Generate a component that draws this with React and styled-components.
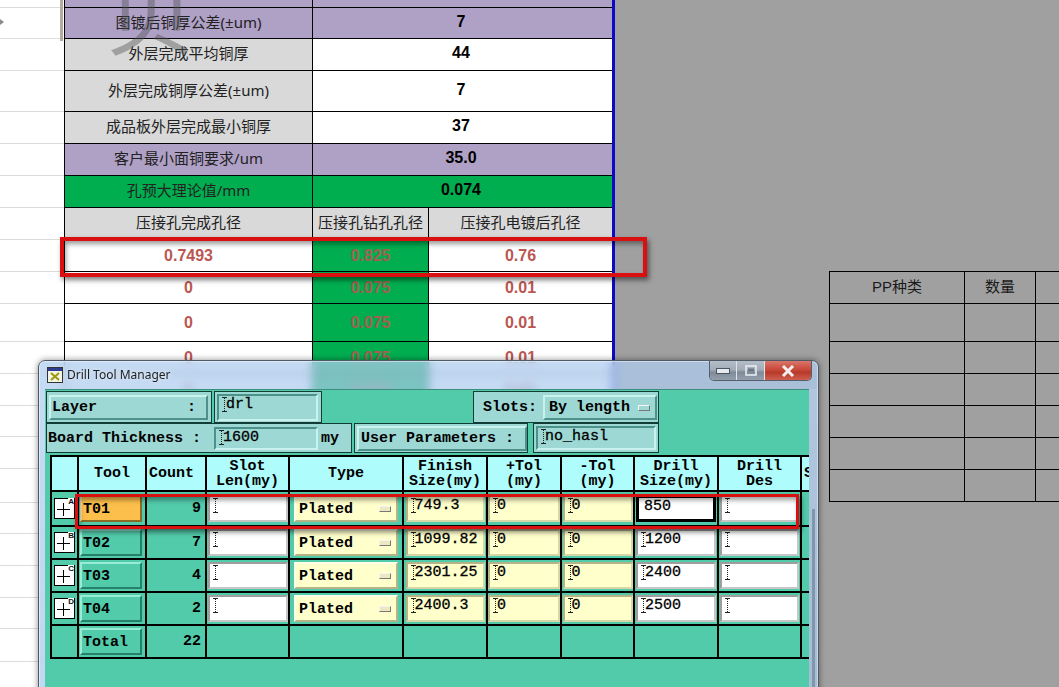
import React from 'react';
import styled, {createGlobalStyle} from 'styled-components';

const GlobalStyle = createGlobalStyle`
  html, body { margin: 0; padding: 0; overflow: hidden; background: #a0a0a0; }
  * { box-sizing: border-box; }
`;

const sheetFont = `"Liberation Sans", "Noto Sans CJK SC", sans-serif`;
const labelFont = `"Noto Sans", "Noto Sans CJK SC", sans-serif`;
const cjkFont = `"Noto Sans CJK SC", "Liberation Sans", sans-serif`;
const monoFont = `"Liberation Mono", "DejaVu Sans Mono", monospace`;

const sheetRows = [
  {h: 8, cells: ['', ''], bg: '#afa0c6'},
  {h: 31, cells: ['图镀后铜厚公差(±um)', '7'], bg: '#afa0c6'},
  {h: 32, cells: ['外层完成平均铜厚', '44'], bg: '#d9d9d9', value: '#fff'},
  {h: 41, cells: ['外层完成铜厚公差(±um)', '7'], bg: '#d9d9d9', value: '#fff'},
  {h: 32, cells: ['成品板外层完成最小铜厚', '37'], bg: '#d9d9d9', value: '#fff'},
  {h: 32, cells: ['客户最小面铜要求/um', '35.0'], bg: '#afa0c6'},
  {h: 32, cells: ['孔预大理论值/mm', '0.074'], bg: '#00ae50'},
];

const holeRows = [
  {h: 32, vals: ['0.7493', '0.825', '0.76']},
  {h: 32, vals: ['0', '0.075', '0.01']},
  {h: 38, vals: ['0', '0.075', '0.01']},
  {h: 32, vals: ['0', '0.075', '0.01']},
  {h: 32, vals: ['0', '0.075', '0.01']},
];

const gutterRows = [8, 31, 32, 41, 32, 32, 32, 32, 32, 32, 38, 32, 32, 31, 32, 34, 31, 32, 32, 31, 33];
const ppRows = [38, 32, 32, 32, 32, 32];

const tools = [
  {id: 'T01', mark: 'A', count: 9, finish: '749.3', drill: '850', hot: true},
  {id: 'T02', mark: 'B', count: 7, finish: '1099.82', drill: '1200'},
  {id: 'T03', mark: 'C', count: 4, finish: '2301.25', drill: '2400'},
  {id: 'T04', mark: 'D', count: 2, finish: '2400.3', drill: '2500'},
];

function Caret() {
  return (
    <CaretSvg width="5" height="15" viewBox="0 0 5 15">
      <path d="M0 .5h5M0 14.5h5" stroke="#222" strokeWidth="1" />
      <path d="M2.5 1v13" stroke="#222" strokeWidth="1" strokeDasharray="1 1" />
    </CaretSvg>
  );
}

function PlusBox({mark}) {
  return (
    <Expand>
      <svg width="19" height="19" viewBox="0 0 19 19">
        <path d="M2 10.5h13M8.5 4v13" stroke="#000" strokeWidth="1" />
      </svg>
      <Mark>{mark}</Mark>
    </Expand>
  );
}

export default function App() {
  return (
    <Page>
      <GlobalStyle />
      <Gutter>
        {gutterRows.map((h, i) => <GutterRow key={i} $h={h} />)}
        <GutterArrow />
      </Gutter>

      <Sheet>
        {sheetRows.map(({h, cells, bg, value}, i) => (
          <SheetRow key={i} $h={h} $cols="248px 1fr">
            <LabelCell $bg={bg}>{cells[0]}</LabelCell>
            <ValueCell $bg={value || bg}>{cells[1]}</ValueCell>
          </SheetRow>
        ))}
        <SheetRow $h={32} $cols="248px 116px 1fr">
          <LabelCell $bg="#d9d9d9">压接孔完成孔径</LabelCell>
          <LabelCell $bg="#d9d9d9">压接孔钻孔孔径</LabelCell>
          <LabelCell $bg="#d9d9d9">压接孔电镀后孔径</LabelCell>
        </SheetRow>
        {holeRows.map(({h, vals}, i) => (
          <SheetRow key={i} $h={h} $cols="248px 116px 1fr">
            <HoleCell $bg="#fff">{vals[0]}</HoleCell>
            <HoleCell $bg="#00ae50" $dim>{vals[1]}</HoleCell>
            <HoleCell $bg="#fff">{vals[2]}</HoleCell>
          </SheetRow>
        ))}
      </Sheet>

      <Dimmed>
        <PPTable>
          <PPHead>PP种类</PPHead>
          <PPHead>数量</PPHead>
          <PPHead />
          {ppRows.map((h, i) => (
            <React.Fragment key={i}>
              <PPCell $h={h} />
              <PPCell $h={h} />
              <PPCell $h={h} />
            </React.Fragment>
          ))}
        </PPTable>
      </Dimmed>

      <WatermarkBar />
      <Watermark>贝</Watermark>
      <RedBox $left={60} $top={237} $w={587} $h={40} $line={4} />

      <Win>
        <TitleBar>
          <svg width="16" height="16" viewBox="0 0 16 16">
            <rect x=".5" y=".5" width="15" height="15" fill="#f4f4e4" stroke="#333" />
            <rect x="1" y="1" width="14" height="3" fill="#2c3d8f" />
            <path d="M4 6l8 7M12 6l-8 7" stroke="#9a9a10" strokeWidth="2" />
          </svg>
          <TitleText>Drill Tool Manager</TitleText>
          <WinButtons>
            <WinButton $w={27}>
              <svg width="14" height="6" viewBox="0 0 14 6"><rect x=".5" y=".5" width="13" height="5" fill="#e6eaee" stroke="#4b5560" /></svg>
            </WinButton>
            <WinButton $w={28}>
              <svg width="12" height="11" viewBox="0 0 12 11"><rect x="1" y="1" width="10" height="9" fill="none" stroke="#e8ecf0" strokeWidth="1.6" /><rect x="3" y="3.5" width="6" height="3" fill="#6c7885" /></svg>
            </WinButton>
            <WinButton $w={46} $close>
              <svg width="14" height="12" viewBox="0 0 14 12"><path d="M2 1l10 10M12 1L2 11" stroke="#f2efee" strokeWidth="3" /></svg>
            </WinButton>
          </WinButtons>
        </TitleBar>

        <WinBody>
          <Content>
            <FormRow>
              <FormCell $w={166}>
                <Bevel $w={159} $pad={1}>{'Layer          :'}</Bevel>
              </FormCell>
              <FormCell $w={108}>
                <Field $w={101} $tone="form"><Caret />drl</Field>
              </FormCell>
              <FormCell $w={186} $ml={149} $pad={9}>
                <PlainText>Slots:</PlainText>
                <Bevel $w={114} $pad={4} $ml={6}>By length<Indicator $mid="#9dd8d4" /></Bevel>
              </FormCell>
            </FormRow>
            <FormRow>
              <FormCell $w={306} $pad={1}>
                <PlainText>Board Thickness :</PlainText>
                <Field $w={104} $h={23} $ml={13} $tone="form"><Caret />1600</Field>
                <PlainText $ml={3}>my</PlainText>
              </FormCell>
              <FormCell $w={174}>
                <Bevel $w={170} $pad={2}>User Parameters :</Bevel>
              </FormCell>
              <FormCell $w={126} $ml={3}>
                <Field $w={120} $h={24} $tone="form"><Caret />no_hasl</Field>
              </FormCell>
            </FormRow>

            <ToolTable>
              <HeadCell />
              <HeadCell>Tool</HeadCell>
              <HeadCell $start>Count</HeadCell>
              <HeadCell>Slot<br />Len(my)</HeadCell>
              <HeadCell>Type</HeadCell>
              <HeadCell>Finish<br />Size(my)</HeadCell>
              <HeadCell>+Tol<br />(my)</HeadCell>
              <HeadCell>-Tol<br />(my)</HeadCell>
              <HeadCell>Drill<br />Size(my)</HeadCell>
              <HeadCell>Drill<br />Des</HeadCell>
              <HeadCell $last $start>S</HeadCell>

              {tools.map(({id, mark, count, finish, drill, hot}) => (
                <React.Fragment key={id}>
                  <BodyCell $center><PlusBox mark={mark} /></BodyCell>
                  <BodyCell><Bevel $w={62} $h={27} $pad={1} $tone={hot ? 'hot' : 'teal'}>{id}</Bevel></BodyCell>
                  <CountCell>{count}</CountCell>
                  <BodyCell $center><Field $w={80} $tone="white"><Caret /></Field></BodyCell>
                  <BodyCell $center>
                    <Bevel $w={104} $h={27} $pad={3} $tone="yellow">Plated<Indicator $mid="#ece8c2" /></Bevel>
                  </BodyCell>
                  <BodyCell $center><Field $w={79} $tone="yellow"><Caret />{finish}</Field></BodyCell>
                  <BodyCell $center><Field $w={72} $tone="yellow"><Caret />0</Field></BodyCell>
                  <BodyCell $center><Field $w={70} $tone="yellow"><Caret />0</Field></BodyCell>
                  <BodyCell $center>
                    {hot ? <Field $w={80} $tone="white" $active>{drill}</Field> : <Field $w={80} $tone="white"><Caret />{drill}</Field>}
                  </BodyCell>
                  <BodyCell $center><Field $w={79} $tone="white"><Caret /></Field></BodyCell>
                  <BodyCell $last />
                </React.Fragment>
              ))}

              <BodyCell />
              <BodyCell><Bevel $w={62} $h={27} $pad={1} $tone="teal">Total</Bevel></BodyCell>
              <CountCell>22</CountCell>
              <BodyCell /><BodyCell /><BodyCell /><BodyCell /><BodyCell /><BodyCell /><BodyCell />
              <BodyCell $last />
            </ToolTable>
          </Content>
          <WinEdge><ScrollThumb /></WinEdge>
        </WinBody>
      </Win>

      <RedBox $left={75} $top={494} $w={724} $h={35} $line={3} />
    </Page>
  );
}

const Page = styled.div`
  position: relative;
  display: flex;
  width: 1059px;
  height: 687px;
  overflow: hidden;
  background: #a0a0a0;
`;

const Gutter = styled.div`
  position: relative;
  flex: none;
  width: 64px;
  background: #fff;
`;

const GutterRow = styled.div`
  height: ${(p) => p.$h}px;
  border-bottom: 1px solid #dcdcdc;
`;

const GutterArrow = styled.span`
  position: absolute;
  left: 0;
  top: 19px;
  border-left: 4px solid #8a8a8a;
  border-top: 3px solid transparent;
  border-bottom: 3px solid transparent;
`;

const Sheet = styled.div`
  flex: none;
  width: 552px;
  border-left: 2px solid #000;
  border-right: 3px solid #0a0ac8;
  margin-left: -1px;
  margin-right: 1px;
  background: #fff;
`;

const SheetRow = styled.div`
  display: grid;
  grid-template-columns: ${(p) => p.$cols};
  height: ${(p) => p.$h}px;
  border-bottom: 1px solid #000;
`;

const LabelCell = styled.div`
  display: flex;
  align-items: center;
  justify-content: center;
  overflow: hidden;
  padding-bottom: 2px;
  background: ${(p) => p.$bg};
  border-right: 1px solid #000;
  font: 400 15px/1 ${labelFont};
  color: #222;
  white-space: nowrap;
  &:last-child { border-right: 0; }
`;

const ValueCell = styled.div`
  display: flex;
  align-items: center;
  justify-content: center;
  overflow: hidden;
  background: ${(p) => p.$bg};
  font: 700 16px/1 ${sheetFont};
  color: #000;
  padding: 0 3px 3px 0;
`;

const HoleCell = styled(ValueCell)`
  border-right: 1px solid #000;
  color: ${(p) => (p.$dim ? '#a2604e' : '#bb5652')};
  padding: 0;
  &:last-child { border-right: 0; }
`;

const Dimmed = styled.div`
  flex: 1;
  padding: 271px 0 0 213px;
  background: #a0a0a0;
`;

const PPTable = styled.div`
  display: grid;
  grid-template-columns: 135px 71px 60px;
  border-top: 1px solid #000;
  border-left: 1px solid #000;
  width: 267px;
`;

const PPCell = styled.div`
  height: ${(p) => p.$h || 32}px;
  border-right: 1px solid #000;
  border-bottom: 1px solid #000;
`;

const PPHead = styled(PPCell)`
  display: flex;
  align-items: center;
  justify-content: center;
  padding-bottom: 2px;
  font: 400 15px/1 ${sheetFont};
  color: #1a1a1a;
`;

const Watermark = styled.div`
  position: absolute;
  left: 106px;
  top: -36px;
  font: 400 90px/1 ${cjkFont};
  color: rgba(80, 80, 80, 0.42);
  pointer-events: none;
`;

const WatermarkBar = styled.div`
  position: absolute;
  left: 60px;
  top: 0;
  width: 3px;
  height: 41px;
  background: #b4ac9c;
`;

const RedBox = styled.div`
  position: absolute;
  left: ${(p) => p.$left}px;
  top: ${(p) => p.$top}px;
  width: ${(p) => p.$w}px;
  height: ${(p) => p.$h}px;
  border: ${(p) => p.$line}px solid #d9100f;
  box-shadow: 2px 3px 5px rgba(0, 0, 0, 0.5), inset 2px 3px 5px rgba(0, 0, 0, 0.4);
  pointer-events: none;
`;

const Win = styled.div`
  position: absolute;
  left: 38px;
  top: 360px;
  width: 781px;
  height: 340px;
  border: 1px solid #4e5a66;
  border-radius: 7px 7px 0 0;
  background: linear-gradient(180deg, rgba(175, 205, 240, 0.72), rgba(150, 190, 235, 0.6));
  backdrop-filter: blur(5px);
  box-shadow: 0 0 6px rgba(0, 0, 0, 0.45), inset 0 0 0 1px rgba(255, 255, 255, 0.45);
`;

const TitleBar = styled.div`
  display: flex;
  align-items: flex-start;
  gap: 4px;
  height: 28px;
  padding: 6px 0 0 8px;
`;

const TitleText = styled.span`
  font: 400 12px/16px "Noto Sans", sans-serif;
  color: #1c1c1c;
  text-shadow: 0 0 4px rgba(255, 255, 255, 0.8);
`;

const WinButtons = styled.div`
  display: flex;
  margin: -6px 6px 0 auto;
  height: 20px;
  border: 1px solid #55606c;
  border-top: 0;
  border-radius: 0 0 5px 5px;
  overflow: hidden;
`;

const WinButton = styled.div`
  display: flex;
  align-items: center;
  justify-content: center;
  width: ${(p) => p.$w}px;
  border-right: 1px solid #dfe5ea;
  background: ${(p) => (p.$close
    ? 'linear-gradient(180deg, #d9766a 0%, #c8493a 45%, #b83a2b 60%, #cf5f50 100%)'
    : 'linear-gradient(180deg, #b4bec9 0%, #a2adb9 45%, #7f8b98 60%, #93a0ac 100%)')};
  &:last-child { border-right: 0; }
`;

const WinBody = styled.div`
  display: flex;
  margin-left: 6px;
  height: 310px;
`;

const Content = styled.div`
  flex: none;
  width: 764px;
  padding: 1px 0 0 1px;
  background: #52cbaa;
  border-top: 1px solid #3d8f7c;
`;

const WinEdge = styled.div`
  flex: 1;
  padding: 120px 3px 0 3px;
  background: rgba(200, 220, 240, 0.25);
`;

const ScrollThumb = styled.div`
  height: 100%;
  background: #7f96ab;
`;

const FormRow = styled.div`
  display: flex;
  gap: 2px;
  height: 32px;
  &:nth-child(2) { height: 30px; margin-bottom: 2px; }
`;

const FormCell = styled.div`
  display: flex;
  align-items: center;
  flex: none;
  width: ${(p) => p.$w}px;
  margin-left: ${(p) => p.$ml || 0}px;
  padding-left: ${(p) => (p.$pad === undefined ? 2 : p.$pad)}px;
  background: #9dd8d4;
  border: 1px solid #123c36;
  font: 700 15px/1 ${monoFont};
  color: #000;
  white-space: pre;
`;

const PlainText = styled.span`
  margin-left: ${(p) => p.$ml || 0}px;
`;

const toneColors = {
  form: ['#9dd8d4', '#c9f1ee', '#4c918a'],
  teal: ['#52cbaa', '#97ecd3', '#27806a'],
  hot: ['#fdbf4b', '#fde2a8', '#8a6a24'],
  yellow: ['#ffffcc', '#ffffe8', '#b4b488'],
};

const Bevel = styled.div`
  display: flex;
  align-items: center;
  flex: none;
  width: ${(p) => p.$w}px;
  height: ${(p) => p.$h || 25}px;
  margin-left: ${(p) => p.$ml || 0}px;
  padding: 1px 0 0 ${(p) => p.$pad}px;
  background: ${(p) => toneColors[p.$tone || 'form'][0]};
  border: 2px solid;
  border-color: ${(p) => {
    const [, hi, lo] = toneColors[p.$tone || 'form'];
    return `${hi} ${lo} ${lo} ${hi}`;
  }};
  font: 700 15px/1 ${monoFont};
  color: #000;
  white-space: pre;
`;

const Indicator = styled.span`
  width: 12px;
  height: 6px;
  margin: 0 5px 0 auto;
  background: ${(p) => p.$mid};
  border: 1px solid;
  border-color: #f4f4f4 #777 #777 #f4f4f4;
`;

const fieldColors = {
  form: ['#9dd8d4', '#4c918a', '#c9f1ee'],
  white: ['#fff', '#9e9e9e', '#c6c6c6'],
  yellow: ['#ffffcc', '#b4b488', '#d6d6a6'],
};

const Field = styled.div`
  display: flex;
  align-items: flex-start;
  flex: none;
  width: ${(p) => p.$w}px;
  height: ${(p) => p.$h || 27}px;
  margin-left: ${(p) => p.$ml || 0}px;
  padding: 1px 0 0 ${(p) => (p.$active ? 5 : 3)}px;
  background: ${(p) => fieldColors[p.$tone][0]};
  border: ${(p) => (p.$active ? '3px solid #000' : '2px solid')};
  border-color: ${(p) => (p.$active ? '#000' : `${fieldColors[p.$tone][1]} ${fieldColors[p.$tone][2]} ${fieldColors[p.$tone][2]} ${fieldColors[p.$tone][1]}`)};
  font: 400 15px/15px ${monoFont};
  -webkit-text-stroke: 0.3px #000;
  color: #000;
  white-space: pre;
`;

const CaretSvg = styled.svg`
  flex: none;
  margin-right: -1px;
`;

const ToolTable = styled.div`
  display: grid;
  grid-template-columns: 27px 68px 60px 83px 114px 84px 74px 73px 84px 83px 1fr;
  grid-template-rows: 37px 35px 33px 33px 33px 33px;
  margin-left: 4px;
  border-left: 2px solid #000;
`;

const HeadCell = styled.div`
  display: flex;
  align-items: center;
  justify-content: ${(p) => (p.$start ? 'flex-start' : 'center')};
  overflow: hidden;
  padding-left: ${(p) => (p.$start ? 2 : 0)}px;
  text-align: center;
  background: #aefcfb;
  border-top: 2px solid #000;
  border-bottom: 2px solid #000;
  border-right: ${(p) => (p.$last ? '0' : '2px solid #000')};
  font: 700 15px/15px ${monoFont};
  color: #000;
`;

const BodyCell = styled.div`
  display: flex;
  align-items: center;
  justify-content: ${(p) => (p.$center ? 'center' : 'flex-start')};
  padding-left: ${(p) => (p.$center ? 0 : 1)}px;
  border-bottom: 2px solid #000;
  border-right: ${(p) => (p.$last ? '0' : '2px solid #000')};
  overflow: hidden;
`;

const CountCell = styled(BodyCell)`
  justify-content: flex-end;
  padding-right: 4px;
  font: 700 15px/1 ${monoFont};
  color: #000;
`;

const Expand = styled.div`
  position: relative;
  width: 21px;
  height: 21px;
  background: #fff;
  border: 1px solid #000;
`;

const Mark = styled.span`
  position: absolute;
  top: -1px;
  right: 0;
  font: 700 8px/8px ${sheetFont};
  color: #111;
  background: #fff;
`;
